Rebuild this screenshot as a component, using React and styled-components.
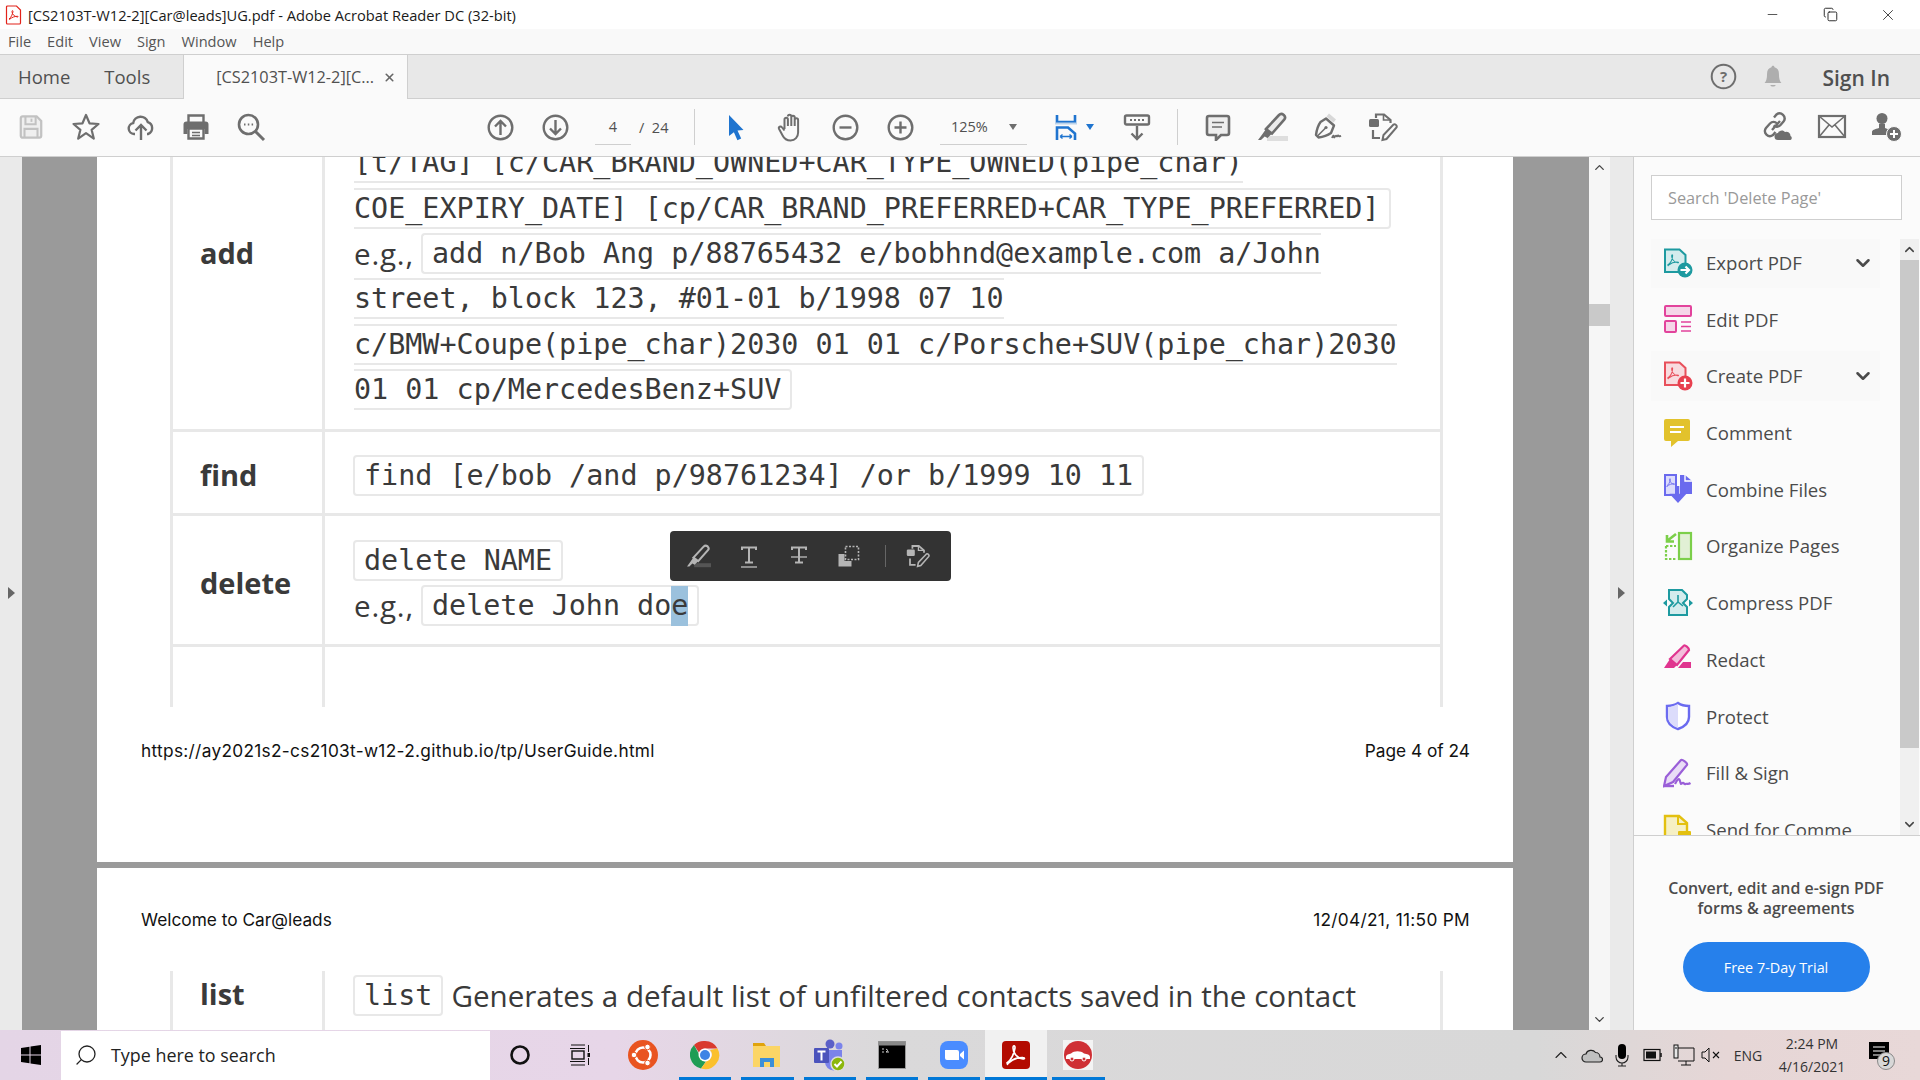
import React from "react";
import styled, { createGlobalStyle } from "styled-components";
import { ChevronDown, ChevronUp, Search, Minus, X, Copy } from "lucide-react";

const UI_FONT = `"Open Sans", "Noto Sans", sans-serif`;
const DOC_FONT = `"Open Sans", "Noto Sans", sans-serif`;
const MONO_FONT = `"DejaVu Sans Mono", "Liberation Mono", monospace`;
const ICON_GREY = "#6e6e6e";
const ROW_LINE = "#e8e8e8";

const GlobalStyle = createGlobalStyle`
    html, body {
        margin: 0;
        padding: 0;
        overflow: hidden;
        background: #fff;
        font-family: ${UI_FONT};
    }
    * { box-sizing: border-box; }
`;

const Window = styled.div`
    width: 1920px;
    height: 1080px;
    display: flex;
    flex-direction: column;
    overflow: hidden;
    position: relative;
`;
const TitleBar = styled.div`
    height: 29px;
    flex-shrink: 0;
    display: flex;
    align-items: center;
    background: #fff;
    padding-left: 4px;
`;
const TitleText = styled.span`
    margin-left: 4px;
    font-size: 14.65px;
    color: #1a1a1a;
    white-space: nowrap;
`;
const WindowButtons = styled.div`
    margin-left: auto;
    margin-right: 3px;
    display: flex;
    align-items: center;
    color: #222;
`;
const WindowButton = styled.div`
    width: 58px;
    display: flex;
    justify-content: center;
`;
const MenuBar = styled.div`
    height: 26px;
    flex-shrink: 0;
    display: flex;
    align-items: center;
    gap: 16px;
    padding: 0 0 2px 8px;
    background: #f9f9f9;
    border-bottom: 1px solid #cfcfcf;
    font-size: 14.6px;
    color: #555;
`;
const TabBar = styled.div`
    height: 44px;
    flex-shrink: 0;
    display: flex;
    align-items: stretch;
    background: #e8e8e8;
    border-bottom: 1px solid #cfcfcf;
`;
const NavTab = styled.div`
    display: flex;
    align-items: center;
    margin-left: ${props => props.$left}px;
    font-size: 18.5px;
    color: #505050;
`;
const DocTab = styled.div`
    width: 225px;
    height: 44px;
    margin-left: 33px;
    padding-left: 32px;
    display: flex;
    align-items: center;
    background: #fafafa;
    border-left: 1px solid #cfcfcf;
    border-right: 1px solid #cfcfcf;
    font-size: 16.3px;
    color: #505050;
    white-space: nowrap;
`;
const TabClose = styled.span`
    margin-left: 9px;
    display: flex;
    color: #666;
`;
const TabRight = styled.div`
    margin-left: auto;
    display: flex;
    align-items: center;
`;
const SignIn = styled.span`
    margin: 3px 30px 0 37px;
    font-size: 21px;
    font-weight: 600;
    color: #505050;
`;
const Toolbar = styled.div`
    height: 58px;
    flex-shrink: 0;
    display: flex;
    align-items: center;
    padding: 0 6px 1px 3px;
    background: #fafafa;
    border-bottom: 1px solid #cfcfcf;
`;
const ToolButton = styled.div`
    width: ${props => props.$width || 55}px;
    margin-left: ${props => props.$left || 0}px;
    flex-shrink: 0;
    display: flex;
    justify-content: center;
    align-items: center;
`;
const ToolSeparator = styled.div`
    width: 1px;
    height: 36px;
    margin-left: ${props => props.$left}px;
    flex-shrink: 0;
    background: #cfcfcf;
`;
const PageInput = styled.div`
    width: 36px;
    height: 36px;
    margin-left: 12px;
    flex-shrink: 0;
    display: flex;
    align-items: center;
    justify-content: center;
    border-bottom: 1px solid #cfcfcf;
    font-size: 14.5px;
    color: #505050;
`;
const PageTotal = styled.span`
    margin-left: 8px;
    width: 55px;
    flex-shrink: 0;
    font-size: 14.5px;
    color: #505050;
    white-space: pre;
`;
const ZoomCombo = styled.div`
    width: 87px;
    height: 36px;
    margin-left: 12px;
    padding-left: 11px;
    flex-shrink: 0;
    display: flex;
    align-items: center;
    border-bottom: 1px solid #cfcfcf;
    font-size: 14.5px;
    color: #505050;
`;
const SmallCaret = styled.span`
    width: 0;
    height: 0;
    margin-left: ${props => props.$left}px;
    border-left: 4.5px solid transparent;
    border-right: 4.5px solid transparent;
    border-top: 6px solid ${props => props.$color || "#6e6e6e"};
`;
const ToolSpacer = styled.div`
    flex: 1;
`;
const Main = styled.div`
    flex: 1;
    min-height: 0;
    display: flex;
`;
const Gutter = styled.div`
    width: ${props => props.$width}px;
    flex-shrink: 0;
    display: flex;
    align-items: center;
    justify-content: center;
    background: #eaeaea;
    padding-bottom: 2px;
`;
const GutterArrow = styled.span`
    width: 0;
    height: 0;
    border-top: 6px solid transparent;
    border-bottom: 6px solid transparent;
    border-left: 7px solid #666;
`;
const Canvas = styled.div`
    width: 1567px;
    flex-shrink: 0;
    background: #9a9a9a;
    padding-left: 75px;
    overflow: hidden;
`;
const Page = styled.div`
    width: 1416px;
    height: ${props => props.$height}px;
    margin-bottom: 6px;
    background: #fff;
    display: flex;
    flex-direction: column;
`;
const Table = styled.div`
    width: 1273px;
    margin-left: 73px;
    margin-top: ${props => props.$top || 0}px;
    border-left: 3px solid ${ROW_LINE};
    border-right: 3px solid ${ROW_LINE};
    flex-shrink: 0;
`;
const Row = styled.div`
    height: ${props => props.$height}px;
    display: grid;
    grid-template-columns: 149px 1fr;
    overflow: hidden;
    padding-top: ${props => props.$top || 0}px;
    border-bottom: ${props => (props.$last ? "none" : `3px solid ${ROW_LINE}`)};
    align-items: ${props => props.$align || "center"};
`;
const RowLabel = styled.div`
    padding-left: 27px;
    margin-top: ${props => props.$offset || 0}px;
    font-family: ${DOC_FONT};
    font-size: 29px;
    font-weight: 700;
    color: #3a3a3a;
`;
const RowBody = styled.div`
    padding-left: 29px;
    margin-top: ${props => props.$offset || 0}px;
`;
const Divider = styled.div`
    border-left: 3px solid ${ROW_LINE};
    height: 100%;
`;
const Cell = styled.div`
    align-self: stretch;
    display: flex;
    flex-direction: column;
    justify-content: ${props => (props.$top ? "flex-start" : "center")};
    border-left: 3px solid ${ROW_LINE};
    margin-top: ${props => props.$lift || 0}px;
`;
const Line = styled.div`
    height: 45.4px;
    flex-shrink: 0;
    display: flex;
    align-items: center;
    white-space: pre;
    font-family: ${DOC_FONT};
    font-size: 29.6px;
    color: #3a3a3a;
`;
const Lead = styled.span`
    width: 68px;
    flex-shrink: 0;
    letter-spacing: 0.8px;
`;
const Code = styled.span`
    height: 41px;
    display: inline-flex;
    align-items: center;
    white-space: pre;
    font-family: ${MONO_FONT};
    font-size: 28.4px;
    color: #3a3a3a;
    border: 2px solid ${ROW_LINE};
    border-left-width: ${props => (props.$openLeft ? 0 : 2)}px;
    border-right-width: ${props => (props.$openRight ? 0 : 2)}px;
    border-radius: ${props => (props.$openLeft ? "0" : "4px")} ${props => (props.$openRight ? "0 0" : "4px 4px")} ${props => (props.$openLeft ? "0" : "4px")};
    padding-left: ${props => (props.$openLeft ? 0 : 9)}px;
    padding-right: ${props => (props.$openRight ? 0 : 9)}px;
    margin-left: ${props => (props.$openLeft ? 0 : -1)}px;
`;
const Selected = styled.span`
    background: #9bc1dd;
    height: 40px;
    display: inline-flex;
    align-items: center;
`;
const AfterText = styled.span`
    margin-left: 8px;
`;
const PageLine = styled.div`
    display: flex;
    justify-content: space-between;
    padding: 0 43px 0 44px;
    font-family: Inter, "Liberation Sans", sans-serif;
    font-size: 17.3px;
    line-height: 20px;
    color: #111;
    margin-top: ${props => props.$top}px;
    flex-shrink: 0;
`;
const SpacedText = styled.span`
    letter-spacing: 0.3px;
`;
const ScrollTrack = styled.div`
    width: 21px;
    flex-shrink: 0;
    display: flex;
    flex-direction: column;
    align-items: center;
    background: #f6f6f6;
    color: #444;
`;
const ScrollCap = styled.div`
    height: 21px;
    width: 100%;
    flex-shrink: 0;
    display: flex;
    align-items: center;
    justify-content: center;
`;
const ScrollThumb = styled.div`
    width: 100%;
    height: ${props => props.$height}px;
    margin-top: ${props => props.$top}px;
    margin-bottom: auto;
    background: #c9c9c9;
`;
const Panel = styled.div`
    flex: 1;
    display: flex;
    flex-direction: column;
    background: #fbfbfb;
    border-left: 1px solid #cfcfcf;
`;
const SearchBox = styled.div`
    height: 45px;
    margin: 18px 18px 19px 17px;
    padding-left: 16px;
    flex-shrink: 0;
    display: flex;
    align-items: center;
    background: #fff;
    border: 1px solid #cfcfcf;
    font-size: 16.3px;
    color: #999;
`;
const ToolArea = styled.div`
    height: 597px;
    flex-shrink: 0;
    display: flex;
    border-bottom: 1px solid #cfcfcf;
    overflow: hidden;
`;
const ToolList = styled.div`
    flex: 1;
    padding-left: 17px;
    margin-top: -1.5px;
    overflow: hidden;
`;
const ToolItem = styled.div`
    width: 229px;
    height: 50px;
    margin-bottom: 6.7px;
    padding-left: 12px;
    display: flex;
    align-items: center;
    background: ${props => (props.$expandable ? "#f9f9f9" : "transparent")};
    font-size: 18.6px;
    color: #4b4b4b;
    white-space: nowrap;
`;
const ToolLabel = styled.span`
    margin-left: 13px;
`;
const ItemChevron = styled.span`
    margin-left: auto;
    margin-right: 6px;
    display: flex;
    color: #4b4b4b;
`;
const PanelScroll = styled.div`
    width: 19px;
    margin-right: 1px;
    display: flex;
    flex-direction: column;
    background: #f0f0f0;
    color: #444;
`;
const Trial = styled.div`
    padding: 42px 2px 0 0;
    display: flex;
    flex-direction: column;
    align-items: center;
`;
const TrialText = styled.div`
    font-size: 15.9px;
    font-weight: 600;
    line-height: 20px;
    color: #4b4b4b;
    text-align: center;
    white-space: nowrap;
`;
const TrialButton = styled.div`
    width: 187px;
    height: 50px;
    margin-top: 24px;
    display: flex;
    align-items: center;
    justify-content: center;
    border-radius: 25px;
    background: #2680eb;
    color: #fff;
    font-size: 14.4px;
`;
const FloatBar = styled.div`
    position: absolute;
    left: 670px;
    top: 531px;
    width: 281px;
    height: 50px;
    display: flex;
    align-items: center;
    padding-left: 4px;
    background: #333;
    border-radius: 4px;
`;
const FloatButton = styled.div`
    width: 50px;
    display: flex;
    justify-content: center;
`;
const FloatSeparator = styled.div`
    width: 1px;
    height: 22px;
    margin: 0 7px 0 11px;
    background: #666;
`;
const Taskbar = styled.div`
    height: 50px;
    flex-shrink: 0;
    display: flex;
    align-items: center;
    background: linear-gradient(90deg, #e4d5e6 0%, #e7d6e8 32%, #dad9da 46%, #d8d8d8 80%, #e6d6d6 90%, #e8d8d8 100%);
`;
const StartButton = styled.div`
    width: 61px;
    display: flex;
    justify-content: center;
`;
const TaskSearch = styled.div`
    width: 429px;
    height: 49px;
    padding-left: 13px;
    flex-shrink: 0;
    display: flex;
    align-items: center;
    background: #fff;
    font-size: 17.9px;
    color: #222;
`;
const TaskSearchText = styled.span`
    margin-left: 13px;
`;
const TaskSlot = styled.div`
    width: ${props => props.$width || 62.2}px;
    height: 50px;
    flex-shrink: 0;
    display: flex;
    align-items: center;
    justify-content: center;
    background: ${props => (props.$active ? "#f1f1f1" : "transparent")};
    position: relative;
`;
const AppStrip = styled.div`
    margin-left: 2px;
    display: flex;
`;
const RunningMark = styled.span`
    position: absolute;
    bottom: 0;
    left: ${props => (props.$active ? 0 : 5)}px;
    right: ${props => (props.$active ? 0 : 5)}px;
    height: 3px;
    background: #0078d7;
`;
const Tray = styled.div`
    margin-left: auto;
    padding-right: 7px;
    display: flex;
    align-items: center;
    color: #222;
`;
const TrayItem = styled.div`
    width: ${props => props.$width}px;
    display: flex;
    justify-content: center;
    flex-shrink: 0;
`;
const TrayText = styled.span`
    font-size: 14px;
    color: #333;
    width: 50px;
    text-align: center;
`;
const Clock = styled.div`
    width: 78px;
    text-align: center;
    font-size: 14px;
    line-height: 23px;
    color: #333;
`;

const Svg = ({ size = 28, box = 28, children }) => (
    <svg width={size} height={size} viewBox={`0 0 ${box} ${box}`} fill="none">
        {children}
    </svg>
);

const ACROBAT = "M5 20c3-2 6-7 6.500-12 .2-2-1.300-2-1.300 0 0 4 3 8 8 9 1.500.3 1.500-1 0-1-4-.2-9 1.500-12 4-1 1-.2 1.500-1.200 0z";

const PdfGlyph = ({ color, x = 0, y = 0, scale = 1, width = 1.5 }) => (
    <path d={ACROBAT} transform={`translate(${x} ${y}) scale(${scale})`} stroke={color} strokeWidth={width} fill="none" />
);

const SaveIcon = () => (
    <Svg size={26}>
        <path d="M3 4.500A2 2 0 0 1 5 2.500h15l5 5v16a2 2 0 0 1-2 2H5a2 2 0 0 1-2-2z" stroke="#c2c2c2" strokeWidth="2.400" fill="#efefef" />
        <path d="M8 3v8h11V3M7 25v-9h14v9" stroke="#c2c2c2" strokeWidth="2.200" />
        <path d="M14.500 5v3.500" stroke="#c2c2c2" strokeWidth="2" />
    </Svg>
);
const StarIcon = () => (
    <Svg size={30} box={30}>
        <path d="M15 3l3.500 8.300 9 .7-6.900 5.800 2.200 8.800L15 21.200 7.200 26.600l2.200-8.800L2.500 12l9-.7z" stroke={ICON_GREY} strokeWidth="2.200" strokeLinejoin="round" />
    </Svg>
);
const UploadIcon = () => (
    <Svg size={30} box={30}>
        <path d="M9 22H8a5.500 5.500 0 0 1-.8-10.900 7.500 7.500 0 0 1 14.600-1A6.300 6.300 0 0 1 22 22h-1" stroke={ICON_GREY} strokeWidth="2.400" />
        <path d="M15 28V13M9.500 18.500L15 13l5.500 5.500" stroke={ICON_GREY} strokeWidth="2.400" />
    </Svg>
);
const PrintIcon = () => (
    <Svg size={28}>
        <path d="M6.500 9V2.500h15V9" stroke={ICON_GREY} strokeWidth="2.400" />
        <path d="M4.500 8.500h19a3 3 0 0 1 3 3V21h-4v-5H5.500v5h-4v-9.500a3 3 0 0 1 3-3z" fill={ICON_GREY} />
        <path d="M6.500 15.500h15v10h-15z" stroke={ICON_GREY} strokeWidth="2.400" />
        <path d="M10 19.500h8M10 22.500h8" stroke={ICON_GREY} strokeWidth="1.500" />
    </Svg>
);
const FindIcon = () => (
    <Svg size={30} box={30}>
        <circle cx="12.500" cy="12.500" r="9.500" stroke={ICON_GREY} strokeWidth="2.600" />
        <path d="M19.500 19.500L28 28" stroke={ICON_GREY} strokeWidth="3" />
        <path d="M8 12.500h1.500M11.800 12.500h1.500M15.600 12.500h1.500" stroke={ICON_GREY} strokeWidth="2" />
    </Svg>
);
const CircleSymbol = ({ kind }) => (
    <Svg size={27} box={27}>
        <circle cx="13.500" cy="13.500" r="11.800" stroke={ICON_GREY} strokeWidth="2.400" />
        {kind === "up" && <path d="M13.500 21V7M8 12.500l5.500-5.500 5.500 5.500" stroke={ICON_GREY} strokeWidth="2.400" />}
        {kind === "down" && <path d="M13.500 6v14M8 14.500l5.500 5.500 5.500-5.500" stroke={ICON_GREY} strokeWidth="2.400" />}
        {kind === "minus" && <path d="M7.500 13.500h12" stroke={ICON_GREY} strokeWidth="2.400" />}
        {kind === "plus" && <path d="M7.500 13.500h12M13.500 7.500v12" stroke={ICON_GREY} strokeWidth="2.400" />}
    </Svg>
);
const CursorIcon = () => (
    <Svg size={28}>
        <path d="M7 2l14.500 15-6 .6 3.700 7.900-3.800 1.700-3.500-8L7 23z" fill="#1f74cf" />
    </Svg>
);
const HandIcon = () => (
    <Svg size={30} box={30}>
        <path d="M8.500 17V7.500a1.700 1.700 0 0 1 3.400 0V14m0-9.500a1.700 1.700 0 0 1 3.400 0V14m0-8.500a1.700 1.700 0 0 1 3.400 0V14m0-6a1.700 1.700 0 0 1 3.400 0v12.500c0 4.500-3 8-7.500 8s-6.500-2-8-5l-3.500-6.500c-1-2 1.500-3.500 3-1.500l2.400 3" stroke={ICON_GREY} strokeWidth="2" strokeLinejoin="round" />
    </Svg>
);
const FitIcon = () => (
    <Svg size={26} box={26}>
        <path d="M4 1v7h18V1" stroke="#1f74cf" strokeWidth="2.600" />
        <path d="M2 9.500h22" stroke="#bcd3ea" strokeWidth="2" />
        <path d="M4 26V13.500h11l7 6V26" stroke="#1f74cf" strokeWidth="2.600" />
        <path d="M7 22.500h12M7 22.500l2.500-2M7 22.500l2.500 2M19 22.500l-2.500-2M19 22.500l-2.500 2" stroke="#1f74cf" strokeWidth="1.400" />
    </Svg>
);
const ScrollModeIcon = () => (
    <Svg size={28}>
        <rect x="2" y="2.500" width="24" height="9" rx="1.500" stroke={ICON_GREY} strokeWidth="2.400" />
        <path d="M7 7h2M11 7h2M15 7h2M19 7h2" stroke={ICON_GREY} strokeWidth="2" />
        <path d="M14 13v13M8.500 20.500L14 26l5.500-5.500" stroke={ICON_GREY} strokeWidth="2.400" />
    </Svg>
);
const CommentIcon = () => (
    <Svg size={28}>
        <path d="M5 3h18a2 2 0 0 1 2 2v15a2 2 0 0 1-2 2h-6l-5 5v-5H5a2 2 0 0 1-2-2V5a2 2 0 0 1 2-2z" stroke={ICON_GREY} strokeWidth="2.600" fill="#eeeeee" />
        <path d="M8 9.500h12M8 14h10" stroke={ICON_GREY} strokeWidth="1.500" />
    </Svg>
);
const HighlightIcon = ({ color = ICON_GREY, under = "#dedede", body = "#ececec", size = 30 }) => (
    <Svg size={size} box={30}>
        <path d="M9 24h21v5H9z" fill={under} />
        <path d="M8 17L21 3c1.500-1.500 3.300-1.200 4.800 0 1.500 1.500 1.700 3.200.4 4.700L14 21.500z" stroke={color} strokeWidth="2.600" fill={body} />
        <path d="M8 17l6 4.500-4.500 4.500-2.800-1.500L3 28H0l4.500-6z" fill={color} />
    </Svg>
);
const SignPenIcon = () => (
    <Svg size={30} box={30}>
        <path d="M16 1.500l7 6-2.500 3-7-6z" fill="#d8d8d8" />
        <path d="M13 6.500l8 7-3 7.500c-3.500 2.500-8 4-12.500 4.500L3 23c.5-4 2-9.500 4.500-13z" stroke={ICON_GREY} strokeWidth="2.400" strokeLinejoin="round" />
        <path d="M4.500 24l8-8" stroke={ICON_GREY} strokeWidth="1.600" />
        <circle cx="13" cy="15.500" r="1.600" fill={ICON_GREY} />
        <path d="M19 26c1-3 2-3 2-1s1.500-2.500 2.500-1 1.500-1.500 2-.3 1 .8 2.500 0" stroke={ICON_GREY} strokeWidth="1.800" />
    </Svg>
);
const EditDocIcon = ({ color = ICON_GREY, fill = "#fafafa", size = 30 }) => (
    <Svg size={size} box={30}>
        <path d="M8 6V2.500h8l6.500 5.500v3" stroke={color} strokeWidth="2.200" />
        <path d="M15.500 2.500V8h7" stroke={color} strokeWidth="1.600" />
        <rect x="1" y="7" width="10" height="8" rx="1.500" fill={color} />
        <path d="M5 18v8h7" stroke={color} strokeWidth="2.200" />
        <path d="M14.500 28l1-5 10-10.500c1.500-1 4 1 3 3L18.500 27z" stroke={color} strokeWidth="2" fill={fill} />
    </Svg>
);
const LinkCloudIcon = () => (
    <Svg size={32} box={32}>
        <path d="M11 19l8-9M13 6.500l2.500-3a5 5 0 0 1 7 7l-3 3.500a5 5 0 0 1-7 .5" stroke={ICON_GREY} strokeWidth="2.400" />
        <path d="M16 12.500a5 5 0 0 0-7 0L5 17a5 5 0 0 0 7 7l2.500-3" stroke={ICON_GREY} strokeWidth="2.400" />
        <path d="M17 29a3.500 3.500 0 0 1 0-7c1-3 5.500-3.500 7-1a4 4 0 0 1 5.500 4 2.200 2.200 0 0 1 0 4z" fill={ICON_GREY} />
    </Svg>
);
const MailIcon = () => (
    <Svg size={30} box={30}>
        <rect x="2" y="4" width="26" height="21" stroke={ICON_GREY} strokeWidth="2.200" />
        <path d="M2 4l13 11L28 4M2 25l10-12M28 25L18 13" stroke={ICON_GREY} strokeWidth="1.600" />
    </Svg>
);
const UserAddIcon = () => (
    <Svg size={32} box={32}>
        <circle cx="11" cy="7.500" r="5.500" fill={ICON_GREY} />
        <path d="M8 13h6v4l5 2v5H1v-3c0-2 3-3 7-4z" fill={ICON_GREY} />
        <circle cx="23" cy="23" r="7.500" fill={ICON_GREY} stroke="#fafafa" strokeWidth="1" />
        <path d="M19 23h8M23 19v8" stroke="#fff" strokeWidth="2" />
    </Svg>
);
const HelpIcon = () => (
    <Svg size={27} box={27}>
        <circle cx="13.500" cy="13.500" r="11.800" stroke={ICON_GREY} strokeWidth="2" />
        <text x="13.500" y="19" textAnchor="middle" fontSize="15" fontWeight="700" fill={ICON_GREY} fontFamily="Open Sans">?</text>
    </Svg>
);
const BellIcon = () => (
    <Svg size={27} box={27}>
        <path d="M13.500 1.500c1 0 1.700.7 1.700 1.700 3.500 1 5 3.500 5 7.500 0 5 .8 8 2.800 10H4c2-2 2.800-5 2.800-10 0-4 1.500-6.500 5-7.500 0-1 .7-1.700 1.700-1.700z" fill="#aeaeae" />
        <path d="M10.500 23h6c-.5 2.500-5.500 2.500-6 0z" fill="#aeaeae" />
    </Svg>
);
const TitlePdfIcon = () => (
    <Svg size={20} box={20}>
        <path d="M3.500 1h9l4 4v13a1 1 0 0 1-1 1h-12a1 1 0 0 1-1-1V2a1 1 0 0 1 1-1z" stroke="#e2231a" strokeWidth="1.200" fill="#fff" />
        <path d="M5 14c2-1.500 3.500-4.500 4-7.500.1-1.200-1-1.200-1 0 0 2.500 2 5 5.500 5.500.9.100.9-.7 0-.7-2.500-.1-5.500 1-7.500 2.700-.6.500-.3.800-1 0z" stroke="#e2231a" strokeWidth="1" />
    </Svg>
);

const FloatIconText = ({ strike }) => (
    <Svg size={24} box={24}>
        <path d="M5 6V3.500h14V6M12 4v14M8 18.500h8" stroke="#b5b5b5" strokeWidth="2" />
        <path d={strike ? "M4 13h16" : "M4 23h16"} stroke="#b5b5b5" strokeWidth="1.400" />
    </Svg>
);
const FloatCopy = () => (
    <Svg size={24} box={24}>
        <path d="M1.500 10h6v7h7v5.500h-13z" fill="#b5b5b5" />
        <rect x="8.500" y="2.500" width="13" height="13" stroke="#b5b5b5" strokeWidth="1.600" strokeDasharray="2 1.500" />
    </Svg>
);

const PANEL_ICONS = {
    export: (
        <Svg size={30} box={30}>
            <path d="M2 1.500h14.500l6 5.500V24H2z" fill="#d4eced" stroke="#1d9aa0" strokeWidth="2" />
            <PdfGlyph color="#1d9aa0" x="1" y="2" scale="0.75" width="1.400" />
            <circle cx="22" cy="22" r="7.500" fill="#1d9aa0" />
            <path d="M17.500 22h8M22.500 18.500L26 22l-3.500 3.500" stroke="#fff" strokeWidth="2.200" />
        </Svg>
    ),
    edit: (
        <Svg size={30} box={30}>
            <rect x="2" y="2" width="26" height="10" rx="1" fill="#f5d6e8" stroke="#e2439c" strokeWidth="2" />
            <rect x="2" y="17" width="11" height="11" rx="1" fill="#f5d6e8" stroke="#e2439c" strokeWidth="2" />
            <path d="M18 18h10M18 22.500h10M18 27h10" stroke="#e2439c" strokeWidth="1.400" />
        </Svg>
    ),
    create: (
        <Svg size={30} box={30}>
            <path d="M2 1.500h14.500l6 5.500V24H2z" fill="#f8dcdf" stroke="#e8505b" strokeWidth="2" />
            <PdfGlyph color="#e8505b" x="1" y="2" scale="0.75" width="1.400" />
            <circle cx="22" cy="22" r="7.500" fill="#e8404f" />
            <path d="M17.500 22h9M22 17.500v9" stroke="#fff" strokeWidth="2.200" />
        </Svg>
    ),
    comment: (
        <Svg size={30} box={30}>
            <path d="M3 1h22a2 2 0 0 1 2 2v18a2 2 0 0 1-2 2H15l-7 6v-6H3a2 2 0 0 1-2-2V3a2 2 0 0 1 2-2z" fill="#e2c22c" />
            <path d="M7 9h14M7 14h11" stroke="#fff" strokeWidth="2" />
        </Svg>
    ),
    combine: (
        <Svg size={30} box={30}>
            <path d="M2 1h11v20H2z" fill="#dcdcfb" stroke="#6a6aee" strokeWidth="2" />
            <path d="M17 1h5l7 6v13H17z" fill="#6a6aee" />
            <path d="M22 1v6h7" stroke="#fff" strokeWidth="1.400" />
            <PdfGlyph color="#6a6aee" x="1" y="1" scale="0.55" width="1.600" />
            <path d="M15 12v13M9.500 21L15 27l5.500-6z" stroke="#6a6aee" strokeWidth="2.600" fill="#6a6aee" />
        </Svg>
    ),
    organize: (
        <Svg size={30} box={30}>
            <rect x="16" y="2" width="12" height="26" fill="#e1f0d5" stroke="#7ccf4a" strokeWidth="2.200" />
            <path d="M3 15v13h10M3 15h10" stroke="#7ccf4a" strokeWidth="2.200" strokeDasharray="2.400 1.600" />
            <path d="M13 3L4 10M4 4v6.500h7" stroke="#7ccf4a" strokeWidth="2.600" />
        </Svg>
    ),
    compress: (
        <Svg size={30} box={30}>
            <path d="M6 2h13l5 5v4l-4 4 4 4v8H6v-8l4-4-4-4z" fill="#d4eced" stroke="#1d9aa0" strokeWidth="2" />
            <path d="M0 15l4-3.500v7zM30 15l-4-3.500v7z" fill="#1d9aa0" />
            <path d="M15 7v7l-5 5M15 14l5 4" stroke="#1d9aa0" strokeWidth="1.600" />
        </Svg>
    ),
    redact: (
        <Svg size={30} box={30}>
            <path d="M7 15L21 1.500c1-.8 5 2.500 5 4.500L14 21z" fill="#f3bedb" stroke="#e0358f" strokeWidth="2.200" />
            <path d="M7 15l7 6-3 3H1z" fill="#e0358f" />
            <path d="M15 24l5-6h8v6z" fill="#e0358f" />
        </Svg>
    ),
    protect: (
        <Svg size={30} box={30}>
            <path d="M15 2c3 2 7 3 11 3v11c0 6-5 10-11 12C9 26 4 22 4 16V5c4 0 8-1 11-3z" fill="#fff" stroke="#6b6bf0" strokeWidth="2.400" />
            <path d="M15 3c-3 1.500-6.500 2.800-10 3v10c0 5 4.500 9 10 11z" fill="#dcdcfb" />
        </Svg>
    ),
    fill: (
        <Svg size={30} box={30}>
            <path d="M1 28L3 19 18 2c1-1 7 3 6 5L10 24z" fill="#e9dcf6" stroke="#9a5fd8" strokeWidth="2.200" />
            <path d="M1 28h10" stroke="#9a5fd8" strokeWidth="2.400" />
            <path d="M12 26c2-4 4-7 5-3s1 3 2.500 2 1.500 2 3 1 2 1 5-1" stroke="#9a5fd8" strokeWidth="2.200" />
        </Svg>
    ),
    send: (
        <Svg size={30} box={30}>
            <path d="M2 2h14l8 7v19H2z" fill="#f6f0c4" stroke="#e3c010" strokeWidth="2.400" />
            <path d="M15 2v8h9" stroke="#e3c010" strokeWidth="2" />
            <rect x="15" y="17" width="13" height="11" rx="1" fill="#e3c010" />
        </Svg>
    )
};

const TOOLS = [
    { key: "export", label: "Export PDF", expandable: true },
    { key: "edit", label: "Edit PDF" },
    { key: "create", label: "Create PDF", expandable: true },
    { key: "comment", label: "Comment" },
    { key: "combine", label: "Combine Files" },
    { key: "organize", label: "Organize Pages" },
    { key: "compress", label: "Compress PDF" },
    { key: "redact", label: "Redact" },
    { key: "protect", label: "Protect" },
    { key: "fill", label: "Fill & Sign" },
    { key: "send", label: "Send for Comme" }
];

const WindowsLogo = () => (
    <Svg size={22} box={22}>
        <path d="M1 4l8.500-1.200V10.500H1zM10.500 2.600L21 1v9.500H10.500zM1 11.500h8.500v7.700L1 18zM10.500 11.500H21V21l-10.500-1.500z" fill="#000" />
    </Svg>
);
const UbuntuIcon = () => (
    <Svg size={30} box={30}>
        <circle cx="15" cy="15" r="15" fill="#e95420" />
        <circle cx="15" cy="15" r="7.500" stroke="#fff" strokeWidth="2.600" />
        <circle cx="6" cy="15" r="2.800" fill="#fff" stroke="#e95420" />
        <circle cx="19.500" cy="7" r="2.800" fill="#fff" stroke="#e95420" />
        <circle cx="19.500" cy="23" r="2.800" fill="#fff" stroke="#e95420" />
    </Svg>
);
const ChromeIcon = () => (
    <Svg size={30} box={30}>
        <path d="M15 1a14 14 0 0 1 12.500 7.500H15a6.500 6.500 0 0 0-6 4L4 5A14 14 0 0 1 15 1z" fill="#d93a2e" />
        <path d="M4 5l5.500 10a6.500 6.500 0 0 0 6.500 6.500L11 28.500A14 14 0 0 1 4 5z" fill="#1f9d55" />
        <path d="M27.500 8.500A14 14 0 0 1 11 28.500l5.500-7.500A6.500 6.500 0 0 0 20 10z" fill="#fbc02d" />
        <circle cx="15" cy="15" r="6.500" fill="#fff" />
        <circle cx="15" cy="15" r="5" fill="#3f84e5" />
    </Svg>
);
const FolderIcon = () => (
    <Svg size={30} box={30}>
        <path d="M1 3h11l2 3H1z" fill="#e0a30c" />
        <path d="M1 6h27v21H1z" fill="#fbd566" />
        <path d="M8 27v-9h14v9h-4v-5h-6v5z" fill="#3c8fd8" />
    </Svg>
);
const TeamsIcon = () => (
    <Svg size={34} box={34}>
        <circle cx="17" cy="6" r="4.500" fill="#5b5fc7" />
        <circle cx="26" cy="8" r="3.500" fill="#7b83eb" />
        <path d="M12 12h17v12a8 8 0 0 1-17 0z" fill="#7b83eb" />
        <rect x="1" y="10" width="15" height="15" rx="1" fill="#4b53bc" />
        <path d="M4.500 13.500h8M8.500 13.500v9" stroke="#fff" strokeWidth="2" />
        <circle cx="25" cy="26" r="7" fill="#8cb70c" stroke="#ddd" strokeWidth="1.500" />
        <path d="M21.500 26l2.500 2.500 4.500-5" stroke="#fff" strokeWidth="2" />
    </Svg>
);
const ConsoleIcon = () => (
    <Svg size={28}>
        <rect x="0.500" y="0.500" width="27" height="27" fill="#000" stroke="#999" />
        <rect x="0.500" y="0.500" width="27" height="4" fill="#888" />
        <path d="M4 8h2M4 11h2M8 11l3 0M8 8l2 1.500L8 11" stroke="#ccc" strokeWidth="1" />
    </Svg>
);
const ZoomAppIcon = () => (
    <Svg size={30} box={30}>
        <rect x="1" y="1" width="28" height="28" rx="8" fill="#4a8cff" />
        <path d="M6 10h12a2 2 0 0 1 2 2v8H8a2 2 0 0 1-2-2zM21 14l4-3.500v9L21 16z" fill="#fff" />
    </Svg>
);
const AcrobatAppIcon = () => (
    <Svg size={30} box={30}>
        <rect x="1" y="1" width="28" height="28" rx="4" fill="#b30b00" />
        <path d="M6 23c4-3 7-9 8-15 .2-3-2-3-2 0 0 5 4 10 10 11 2 .3 2-1.500 0-1.500-5-.2-11 2-15 6-1 1 0 1.500-1-.5z" stroke="#fff" strokeWidth="1.600" />
    </Svg>
);
const CarAppIcon = () => (
    <Svg size={30} box={30}>
        <rect width="30" height="30" fill="#f4f4f4" />
        <circle cx="15" cy="15" r="14" fill="#cf3035" />
        <path d="M3 17c0-2.500 3-3 5-3.500 3-3 10-3 13 0 3 .5 6 1 6 3.500v2H3z" fill="#fff" />
        <circle cx="9" cy="19" r="2" fill="#cf3035" stroke="#fff" />
        <circle cx="21" cy="19" r="2" fill="#cf3035" stroke="#fff" />
    </Svg>
);
const CloudIcon = () => (
    <Svg size={22} box={22}>
        <path d="M5 18a4 4 0 0 1 0-8c1-4 7-5 9.500-1.500A4.500 4.500 0 0 1 19 13a2.500 2.500 0 0 1 0 5z" fill="#c0c0c0" stroke="#222" strokeWidth="1.200" />
    </Svg>
);
const MicIcon = () => (
    <Svg size={24} box={24}>
        <rect x="8" y="1" width="8" height="15" rx="4" fill="#000" />
        <path d="M6 12v2a6 6 0 0 0 12 0v-2M12 20v3M8 23h8" stroke="#222" strokeWidth="1.100" />
    </Svg>
);
const BatteryIcon = () => (
    <Svg size={20} box={20}>
        <rect x="1" y="4.500" width="16" height="11" stroke="#111" strokeWidth="1.200" />
        <rect x="3" y="6.500" width="10" height="7" fill="#111" />
        <path d="M18 8v4" stroke="#111" strokeWidth="1.500" />
    </Svg>
);
const NetworkIcon = () => (
    <Svg size={22} box={22}>
        <path d="M5 4h16v13H5M13 17v4M8 21h10" stroke="#111" strokeWidth="1" />
        <rect x="1" y="1" width="4" height="13" fill="#e6e6e6" stroke="#111" strokeWidth="1" />
        <path d="M2 4h2" stroke="#111" strokeWidth="1" />
    </Svg>
);
const MuteIcon = () => (
    <Svg size={20} box={20}>
        <path d="M1 7h3l4-4v14l-4-4H1z" stroke="#111" strokeWidth="1" />
        <path d="M12 7l6 6M18 7l-6 6" stroke="#111" strokeWidth="1.100" />
    </Svg>
);
const NotifyIcon = () => (
    <Svg size={32} box={32}>
        <path d="M3 3h20v17H3z" fill="#000" />
        <path d="M7 8h12M7 12h12M7 16h12" stroke="#fff" strokeWidth="1.200" />
        <circle cx="20" cy="22" r="8.500" fill="#d8d8d8" stroke="#888" />
        <text x="20" y="27" textAnchor="middle" fontSize="14" fontFamily="Open Sans" fill="#111">9</text>
    </Svg>
);

const APPS = [
    { key: "ubuntu", icon: <UbuntuIcon /> },
    { key: "chrome", icon: <ChromeIcon />, running: true },
    { key: "folder", icon: <FolderIcon />, running: true },
    { key: "teams", icon: <TeamsIcon />, running: true },
    { key: "console", icon: <ConsoleIcon />, running: true },
    { key: "zoom", icon: <ZoomAppIcon />, running: true },
    { key: "acrobat", icon: <AcrobatAppIcon />, running: true, active: true },
    { key: "car", icon: <CarAppIcon />, running: true }
];

export default function App() {
    return (
        <Window>
            <GlobalStyle />
            <TitleBar>
                <TitlePdfIcon />
                <TitleText>[CS2103T-W12-2][Car@leads]UG.pdf - Adobe Acrobat Reader DC (32-bit)</TitleText>
                <WindowButtons>
                    <WindowButton><Minus size={15} strokeWidth={1.200} /></WindowButton>
                    <WindowButton><Copy size={15} strokeWidth={1.500} /></WindowButton>
                    <WindowButton><X size={18} strokeWidth={1.100} /></WindowButton>
                </WindowButtons>
            </TitleBar>
            <MenuBar>
                <span>File</span>
                <span>Edit</span>
                <span>View</span>
                <span>Sign</span>
                <span>Window</span>
                <span>Help</span>
            </MenuBar>
            <TabBar>
                <NavTab $left={18}>Home</NavTab>
                <NavTab $left={34}>Tools</NavTab>
                <DocTab>
                    [CS2103T-W12-2][C...
                    <TabClose><X size={13} strokeWidth={3} /></TabClose>
                </DocTab>
                <TabRight>
                    <HelpIcon />
                    <ToolButton $width={24} $left={24}><BellIcon /></ToolButton>
                    <SignIn>Sign In</SignIn>
                </TabRight>
            </TabBar>
            <Toolbar>
                <ToolButton><SaveIcon /></ToolButton>
                <ToolButton><StarIcon /></ToolButton>
                <ToolButton><UploadIcon /></ToolButton>
                <ToolButton><PrintIcon /></ToolButton>
                <ToolButton><FindIcon /></ToolButton>
                <ToolButton $left={195}><CircleSymbol kind="up" /></ToolButton>
                <ToolButton><CircleSymbol kind="down" /></ToolButton>
                <PageInput>4</PageInput>
                <PageTotal>/  24</PageTotal>
                <ToolSeparator $left={0} />
                <ToolButton $left={13}><CursorIcon /></ToolButton>
                <ToolButton><HandIcon /></ToolButton>
                <ToolButton><CircleSymbol kind="minus" /></ToolButton>
                <ToolButton><CircleSymbol kind="plus" /></ToolButton>
                <ZoomCombo>
                    125%
                    <SmallCaret $left={21} />
                </ZoomCombo>
                <ToolButton $width={28} $left={25}><FitIcon /></ToolButton>
                <SmallCaret $left={6} $color="#1f74cf" />
                <ToolButton $left={15}><ScrollModeIcon /></ToolButton>
                <ToolSeparator $left={13} />
                <ToolButton $left={12}><CommentIcon /></ToolButton>
                <ToolButton><HighlightIcon /></ToolButton>
                <ToolButton><SignPenIcon /></ToolButton>
                <ToolButton><EditDocIcon /></ToolButton>
                <ToolSpacer />
                <ToolButton><LinkCloudIcon /></ToolButton>
                <ToolButton><MailIcon /></ToolButton>
                <ToolButton><UserAddIcon /></ToolButton>
            </Toolbar>
            <Main>
                <Gutter $width={22}><GutterArrow /></Gutter>
                <Canvas>
                    <Page $height={705}>
                        <Table>
                            <Row $height={275} $align="start">
                                <RowLabel $offset={76}>add</RowLabel>
                                <Cell $top>
                                    <RowBody $offset={-17}>
                                        <Line><Code $openLeft $openRight>[t/TAG] [c/CAR_BRAND_OWNED+CAR_TYPE_OWNED(pipe_char)</Code></Line>
                                        <Line><Code $openLeft>COE_EXPIRY_DATE] [cp/CAR_BRAND_PREFERRED+CAR_TYPE_PREFERRED]</Code></Line>
                                        <Line><Lead>e.g.,</Lead><Code $openRight>add n/Bob Ang p/88765432 e/bobhnd@example.com a/John</Code></Line>
                                        <Line><Code $openLeft $openRight>street, block 123, #01-01 b/1998 07 10</Code></Line>
                                        <Line><Code $openLeft $openRight>c/BMW+Coupe(pipe_char)2030 01 01 c/Porsche+SUV(pipe_char)2030</Code></Line>
                                        <Line><Code $openLeft>01 01 cp/MercedesBenz+SUV</Code></Line>
                                    </RowBody>
                                </Cell>
                            </Row>
                            <Row $height={84} $top={6}>
                                <RowLabel $offset={-2}>find</RowLabel>
                                <Cell $lift={-6}>
                                    <RowBody $offset={6}>
                                        <Line><Code>find [e/bob /and p/98761234] /or b/1999 10 11</Code></Line>
                                    </RowBody>
                                </Cell>
                            </Row>
                            <Row $height={131} $top={6}>
                                <RowLabel $offset={-2}>delete</RowLabel>
                                <Cell $lift={-6}>
                                    <RowBody $offset={6}>
                                        <Line><Code>delete NAME</Code></Line>
                                        <Line><Lead>e.g.,</Lead><Code>delete John do<Selected>e</Selected></Code></Line>
                                    </RowBody>
                                </Cell>
                            </Row>
                            <Row $height={60} $last>
                                <span />
                                <Divider />
                            </Row>
                        </Table>
                        <PageLine $top={34}>
                            <SpacedText>https://ay2021s2-cs2103t-w12-2.github.io/tp/UserGuide.html</SpacedText>
                            <span>Page 4 of 24</span>
                        </PageLine>
                    </Page>
                    <Page $height={400}>
                        <PageLine $top={42}>
                            <span>Welcome to Car@leads</span>
                            <SpacedText>12/04/21, 11:50 PM</SpacedText>
                        </PageLine>
                        <Table $top={41}>
                            <Row $height={120} $last $align="start">
                                <RowLabel $offset={3}>list</RowLabel>
                                <Cell $top>
                                    <RowBody $offset={2}>
                                        <Line><Code>list</Code><AfterText>Generates a default list of unfiltered contacts saved in the contact</AfterText></Line>
                                        <Line>book.</Line>
                                    </RowBody>
                                </Cell>
                            </Row>
                        </Table>
                    </Page>
                </Canvas>
                <ScrollTrack>
                    <ScrollCap><ChevronUp size={15} strokeWidth={2.200} /></ScrollCap>
                    <ScrollThumb $top={126} $height={22} />
                    <ScrollCap><ChevronDown size={15} strokeWidth={2.200} /></ScrollCap>
                </ScrollTrack>
                <Gutter $width={23}><GutterArrow /></Gutter>
                <Panel>
                    <SearchBox>Search 'Delete Page'</SearchBox>
                    <ToolArea>
                        <ToolList>
                            {TOOLS.map(tool => (
                                <ToolItem key={tool.key} $expandable={tool.expandable}>
                                    {PANEL_ICONS[tool.key]}
                                    <ToolLabel>{tool.label}</ToolLabel>
                                    {tool.expandable && (
                                        <ItemChevron><ChevronDown size={22} strokeWidth={2.800} /></ItemChevron>
                                    )}
                                </ToolItem>
                            ))}
                        </ToolList>
                        <PanelScroll>
                            <ScrollCap><ChevronUp size={15} strokeWidth={2.400} /></ScrollCap>
                            <ScrollThumb $top={0} $height={488} />
                            <ScrollCap><ChevronDown size={15} strokeWidth={2.400} /></ScrollCap>
                        </PanelScroll>
                    </ToolArea>
                    <Trial>
                        <TrialText>Convert, edit and e-sign PDF<br />forms &amp; agreements</TrialText>
                        <TrialButton>Free 7-Day Trial</TrialButton>
                    </Trial>
                </Panel>
            </Main>
            <Taskbar>
                <StartButton><WindowsLogo /></StartButton>
                <TaskSearch>
                    <Search size={24} strokeWidth={1.300} style={{ transform: "scaleX(-1)" }} />
                    <TaskSearchText>Type here to search</TaskSearchText>
                </TaskSearch>
                <TaskSlot $width={60}>
                    <Svg size={22} box={22}><circle cx="11" cy="11" r="8.500" stroke="#111" strokeWidth="2.600" /></Svg>
                </TaskSlot>
                <TaskSlot $width={60}>
                    <Svg size={24} box={24}>
                        <path d="M3 2h14M3 22h14M2 5.500h15M2 18.500h15" stroke="#111" strokeWidth="1" />
                        <rect x="4" y="8" width="12" height="8" stroke="#111" strokeWidth="1.400" />
                        <path d="M20.500 2v7M20.500 15v7" stroke="#111" strokeWidth="1" />
                        <rect x="19.500" y="10" width="2.500" height="4" fill="#111" />
                    </Svg>
                </TaskSlot>
                <AppStrip>
                    {APPS.map(app => (
                        <TaskSlot key={app.key} $active={app.active}>
                            {app.icon}
                            {app.running && <RunningMark $active={app.active} />}
                        </TaskSlot>
                    ))}
                </AppStrip>
                <Tray>
                    <TrayItem $width={32}><ChevronUp size={20} strokeWidth={1.300} /></TrayItem>
                    <TrayItem $width={30}><CloudIcon /></TrayItem>
                    <TrayItem $width={30}><MicIcon /></TrayItem>
                    <TrayItem $width={31}><BatteryIcon /></TrayItem>
                    <TrayItem $width={31}><NetworkIcon /></TrayItem>
                    <TrayItem $width={24}><MuteIcon /></TrayItem>
                    <TrayText>ENG</TrayText>
                    <Clock>2:24 PM<br />4/16/2021</Clock>
                    <TrayItem $width={62}><NotifyIcon /></TrayItem>
                </Tray>
            </Taskbar>
            <FloatBar>
                <FloatButton><HighlightIcon color="#b5b5b5" under="#555" body="#333" size={24} /></FloatButton>
                <FloatButton><FloatIconText /></FloatButton>
                <FloatButton><FloatIconText strike /></FloatButton>
                <FloatButton><FloatCopy /></FloatButton>
                <FloatSeparator />
                <FloatButton><EditDocIcon color="#b5b5b5" fill="#333" size={24} /></FloatButton>
            </FloatBar>
        </Window>
    );
}
